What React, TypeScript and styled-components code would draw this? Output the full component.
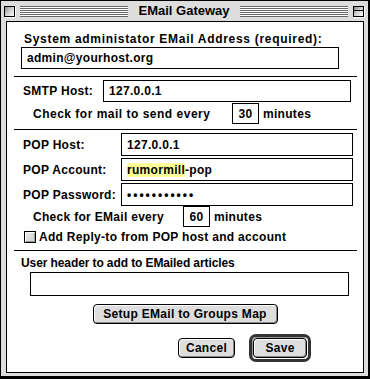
import React from "react";
import styled, {createGlobalStyle} from "styled-components";

const GlobalStyle = createGlobalStyle`
  html, body {
    margin: 0;
    padding: 0;
    background: #fff;
  }
  body {
    font-family: "Liberation Sans", Arial, sans-serif;
    font-weight: bold;
    font-size: 12px;
    letter-spacing: 0.3px;
    color: #000;
  }
`;

const Window = styled.div`
  width: 370px;
  height: 379px;
  box-sizing: border-box;
  border-style: solid;
  border-color: #000;
  border-width: 1px 2px 3px 1px;
  background: #dddddd;
  display: flex;
  flex-direction: column;
`;

const TitleBar = styled.div`
  height: 20px;
  display: flex;
  align-items: center;
  padding: 0 4px 0 3px;
  gap: 5px;
`;

const TitleBox = styled.div`
  width: 11px;
  height: 11px;
  box-sizing: border-box;
  border: 1px solid #000;
  background: linear-gradient(135deg, #888 0%, #ccc 45%, #fff 100%);
  box-shadow: 1px 1px 0 #fff;
`;

const ZoomLine = styled.div`
  margin: 3px 0 0;
  height: 1px;
  background: #000;
`;

const Stripes = styled.div`
  flex: 1;
  height: 11px;
  background: repeating-linear-gradient(to bottom, #666 0 1px, #fff 1px 2px);
`;

const Title = styled.div`
  padding: 0 5px;
  font-size: 13px;
  letter-spacing: 0;
  line-height: 16px;
`;

const Content = styled.div`
  margin: 0 4px 3px 5px;
  padding-top: 9px;
  flex: 1;
  box-sizing: border-box;
  border: 1px solid #000;
  background: #fff;
  display: flex;
  flex-direction: column;
`;

const Label = styled.div<{ $indent: number; $width?: number; $top?: number; $spacing?: number }>`
  margin-left: ${p => p.$indent}px;
  margin-top: ${p => p.$top ?? 0}px;
  width: ${p => (p.$width ? `${p.$width}px` : "auto")};
  letter-spacing: ${p => p.$spacing ?? 0.3}px;
  flex-shrink: 0;
  line-height: 16px;
  white-space: nowrap;
`;

const Field = styled.div<{ $left: number; $width: number; $height: number; $top?: number }>`
  margin-left: ${p => p.$left}px;
  margin-top: ${p => p.$top ?? 0}px;
  width: ${p => p.$width}px;
  height: ${p => p.$height}px;
  box-sizing: border-box;
  border: 1px solid #000;
  display: flex;
  align-items: center;
  padding-left: 5px;
  white-space: nowrap;
  flex-shrink: 0;
`;

const NumBox = styled.div`
  width: 27px;
  height: 21px;
  box-sizing: border-box;
  border: 1px solid #000;
  display: flex;
  align-items: center;
  justify-content: center;
`;

const Row = styled.div<{ $top?: number; $gap?: number }>`
  display: flex;
  align-items: center;
  margin-top: ${p => p.$top ?? 0}px;
  gap: ${p => p.$gap ?? 0}px;
`;

const Divider = styled.div<{ $top: number }>`
  margin: ${p => p.$top}px 6px 0 7px;
  height: 1px;
  background: #000;
`;

const Highlight = styled.span`
  background: #ffff99;
`;

const Dots = styled.span`
  letter-spacing: 2px;
`;

const CheckRow = styled.label`
  display: flex;
  align-items: center;
  gap: 3px;
  margin: 2px 0 0 17px;
  line-height: 16px;
  white-space: nowrap;
`;

const CheckBox = styled.span`
  width: 12px;
  height: 12px;
  box-sizing: border-box;
  border: 1px solid #000;
  background: linear-gradient(135deg, #eee 0%, #ccc 100%);
  box-shadow: inset 1px 1px 0 #fff, inset -1px -1px 0 #999;
`;

const Button = styled.button<{ $width: number }>`
  font-family: "Liberation Sans", Arial, sans-serif;
  font-weight: bold;
  font-size: 12px;
  letter-spacing: 0.3px;
  color: #000;
  width: ${p => p.$width}px;
  height: 20px;
  padding: 0;
  box-sizing: border-box;
  border: 1px solid #000;
  border-radius: 4px;
  background: #dedede;
  box-shadow: inset 1px 1px 0 #fff, inset -1px -1px 0 #888;
`;

const DefaultRing = styled.div`
  padding: 1px;
  border: 3px solid #333;
  border-radius: 7px;
  display: flex;
  box-shadow: inset 1px 1px 0 #999;
`;

const ButtonRow = styled.div`
  display: flex;
  justify-content: flex-end;
  align-items: center;
  gap: 14px;
  margin: 10px 52px 0 0;
`;

const Center = styled.div`
  display: flex;
  justify-content: center;
  margin-top: 8px;
`;

export default function App() {
    return (
        <>
            <GlobalStyle/>
            <Window>
                <TitleBar>
                    <TitleBox/>
                    <Stripes/>
                    <Title>EMail Gateway</Title>
                    <Stripes/>
                    <TitleBox>
                        <ZoomLine/>
                    </TitleBox>
                </TitleBar>
                <Content>
                    <Label $indent={17} $spacing={0.7}>System administator EMail Address (required):</Label>
                    <Field $left={14} $width={318} $height={22}>admin@yourhost.org</Field>
                    <Divider $top={7}/>

                    <Row $top={3}>
                        <Label $indent={16} $width={80}>SMTP Host:</Label>
                        <Field $left={0} $width={248} $height={22}>127.0.0.1</Field>
                    </Row>
                    <Row $top={1} $gap={4}>
                        <Label $indent={26} $width={195} $spacing={0.5}>Check for mail to send every</Label>
                        <NumBox>30</NumBox>
                        <Label $indent={0}>minutes</Label>
                    </Row>
                    <Divider $top={5}/>

                    <Row $top={3}>
                        <Label $indent={16} $width={98}>POP Host:</Label>
                        <Field $left={0} $width={232} $height={23}>127.0.0.1</Field>
                    </Row>
                    <Row $top={2}>
                        <Label $indent={16} $width={98}>POP Account:</Label>
                        <Field $left={0} $width={232} $height={23}>
                            <Highlight>rumormill</Highlight>-pop
                        </Field>
                    </Row>
                    <Row $top={2}>
                        <Label $indent={16} $width={98}>POP Password:</Label>
                        <Field $left={0} $width={232} $height={23}>
                            <Dots>•••••••••••</Dots>
                        </Field>
                    </Row>
                    <Row $gap={4}>
                        <Label $indent={26} $width={146}>Check for EMail every</Label>
                        <NumBox>60</NumBox>
                        <Label $indent={0}>minutes</Label>
                    </Row>
                    <CheckRow>
                        <CheckBox/>
                        Add Reply-to from POP host and account
                    </CheckRow>
                    <Divider $top={5}/>

                    <Label $indent={14} $top={4} $spacing={-0.1}>User header to add to EMailed articles</Label>
                    <Field $left={23} $width={319} $height={24} $top={1}/>
                    <Center>
                        <Button $width={185}>Setup EMail to Groups Map</Button>
                    </Center>
                    <ButtonRow>
                        <Button $width={57}>Cancel</Button>
                        <DefaultRing>
                            <Button $width={54}>Save</Button>
                        </DefaultRing>
                    </ButtonRow>
                </Content>
            </Window>
        </>
    );
}
